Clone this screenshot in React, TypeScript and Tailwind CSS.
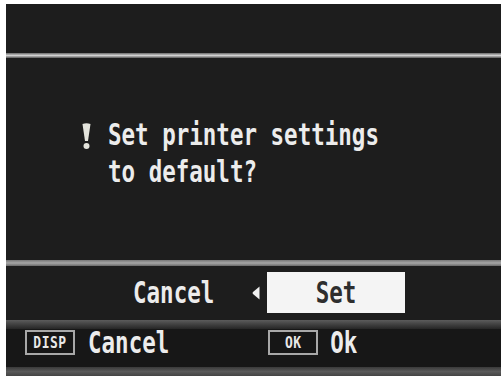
import React from "react"

const mono = { fontFamily: '"DejaVu Sans Mono", "Liberation Mono", monospace' }

function Key({ label }: { label: string }) {
	return (
		<div className="flex h-[25px] w-[50px] items-center justify-center border-2 border-[#a8a8a8] bg-[#161616]">
			<span className="scale-y-[1.2] text-[13px] leading-none font-bold tracking-[0.5px] text-[#e8e8e8]" style={mono}>
				{label}
			</span>
		</div>
	)
}

function Label({ children, className = "" }: { children: React.ReactNode; className?: string }) {
	return (
		<span className={`block origin-center scale-y-[1.35] text-[22.5px] leading-none font-bold whitespace-pre ${className}`} style={mono}>
			{children}
		</span>
	)
}

export default function App() {
	return (
		<div className="flex h-[376px] w-[501px] flex-col bg-white pt-[4px] pl-[6px]">
			<div className="flex flex-1 flex-col bg-[#1d1d1d] text-[#ececec]">
				{/* header strip, empty */}
				<div className="h-[49px]" />
				<div className="h-[5px] bg-gradient-to-b from-[#6a6a6a] via-[#d2d2d2] to-[#5a5a5a]" />

				{/* message */}
				<div className="flex h-[202px] pt-[58px]">
					<div className="ml-[76px] w-[26px] pt-[7px]">
						<svg width="9" height="27" viewBox="0 0 9 27">
							<path d="M0.5 1 Q4.5 -0.5 8.5 1 L6 18 L3 18 Z" fill="#e4e4dc" />
							<circle cx="4.5" cy="23" r="3" fill="#e4e4dc" />
						</svg>
					</div>
					<div className="flex flex-col">
						<div className="flex h-[37px] items-center">
							<Label>Set printer settings</Label>
						</div>
						<div className="flex h-[37px] items-center">
							<Label>to default?</Label>
						</div>
					</div>
				</div>

				<div className="h-[6px] bg-gradient-to-b from-[#777] via-[#a6a6a6] to-[#6a6a6a]" />

				{/* choice row */}
				<div className="flex h-[54px] items-start pt-[6px]">
					<div className="ml-[127px] flex h-[41px] w-[81px] items-center">
						<Label>Cancel</Label>
					</div>
					<div className="ml-[38px] flex h-[41px] items-center">
						<svg width="8" height="14" viewBox="0 0 8 14">
							<path d="M7.5 0.5 L7.5 13.5 L1 8 Q0 7 1 6 Z" fill="#f0f0f0" />
						</svg>
					</div>
					<div className="ml-[7px] flex h-[41px] w-[138px] items-center justify-center bg-[#f4f4f4] text-[#2e2e2e]">
						<Label>Set</Label>
					</div>
				</div>

				<div className="h-[9px] bg-gradient-to-b from-[#5c5c5c] to-[#262626]" />

				{/* button guide */}
				<div className="flex h-[38px] items-start bg-[#171717] pt-[1px]">
					<div className="ml-[19px]">
						<Key label="DISP" />
					</div>
					<div className="ml-[13px] flex h-[25px] items-center">
						<Label>Cancel</Label>
					</div>
					<div className="ml-[99px]">
						<Key label="OK" />
					</div>
					<div className="ml-[12px] flex h-[25px] items-center">
						<Label>Ok</Label>
					</div>
				</div>
				<div className="flex-1 bg-gradient-to-b from-[#3a3a3a] via-[#5a5a5a] to-[#444]" />
			</div>
		</div>
	)
}
